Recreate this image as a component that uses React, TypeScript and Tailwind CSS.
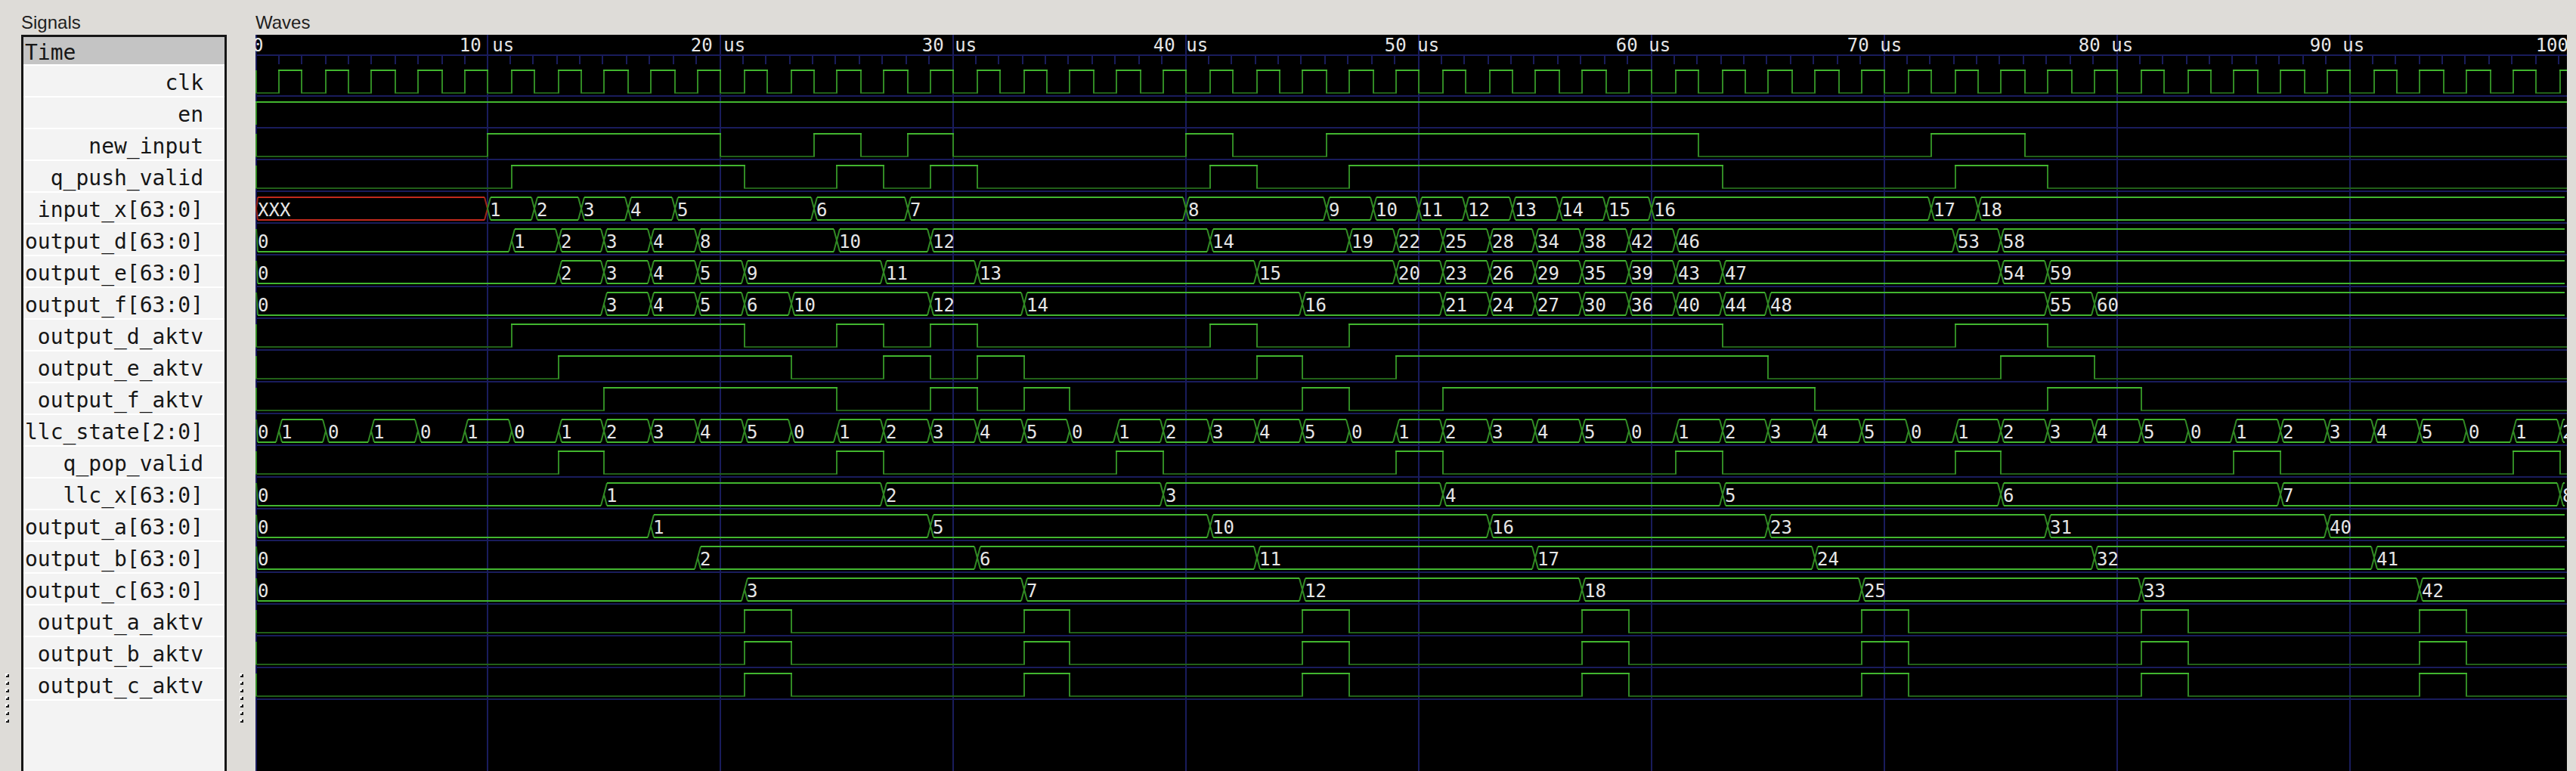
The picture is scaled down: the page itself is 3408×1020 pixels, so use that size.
const PX_PER_US = 15.3995;
const ROW = 42;
const DURATION = 100;

type Signal =
  | { name: string; kind: "bit"; edges: number[]; start?: boolean }
  | { name: string; kind: "bus"; values: [number, string][] };

const bus = (name: string, text: string): Signal => ({
  name,
  kind: "bus",
  values: text.split(" ").map((entry) => {
    const [t, v] = entry.split("=");
    return [Number(t), v] as [number, string];
  }),
});

const bit = (name: string, edges: number[], start = false): Signal => ({ name, kind: "bit", edges, start });

const stateText = () => {
  const out = ["0=0", "1=1", "3=0", "5=1", "7=0", "9=1", "11=0"];
  for (let t = 13; t < DURATION; t += 12) {
    for (let i = 0; i < 6; i++) {
      if (t + i * 2 < DURATION) out.push(`${t + i * 2}=${(i + 1) % 6}`);
    }
  }
  return out.join(" ");
};

const clockEdges = Array.from({ length: 99 }, (_, i) => i + 1);
const pulses = [21, 23, 33, 35, 45, 47, 57, 59, 69, 71, 81, 83, 93, 95];
const pushEdges = [11, 21, 25, 27, 29, 31, 41, 43, 47, 63, 73, 77];

const signals: Signal[] = [
  bit("clk", clockEdges),
  bit("en", [], true),
  bit("new_input", pushEdges.map((t) => t - 1)),
  bit("q_push_valid", pushEdges),
  bus("input_x[63:0]", "0=XXX 10=1 12=2 14=3 16=4 18=5 24=6 28=7 40=8 46=9 48=10 50=11 52=12 54=13 56=14 58=15 60=16 72=17 74=18"),
  bus("output_d[63:0]", "0=0 11=1 13=2 15=3 17=4 19=8 25=10 29=12 41=14 47=19 49=22 51=25 53=28 55=34 57=38 59=42 61=46 73=53 75=58"),
  bus("output_e[63:0]", "0=0 13=2 15=3 17=4 19=5 21=9 27=11 31=13 43=15 49=20 51=23 53=26 55=29 57=35 59=39 61=43 63=47 75=54 77=59"),
  bus("output_f[63:0]", "0=0 15=3 17=4 19=5 21=6 23=10 29=12 33=14 45=16 51=21 53=24 55=27 57=30 59=36 61=40 63=44 65=48 77=55 79=60"),
  bit("output_d_aktv", pushEdges),
  bit("output_e_aktv", [13, 23, 27, 29, 31, 33, 43, 45, 49, 65, 75, 79]),
  bit("output_f_aktv", [15, 25, 29, 31, 33, 35, 45, 47, 51, 67, 77, 81]),
  bus("llc_state[2:0]", stateText()),
  bit("q_pop_valid", [13, 15, 25, 27, 37, 39, 49, 51, 61, 63, 73, 75, 85, 87, 97, 99]),
  bus("llc_x[63:0]", "0=0 15=1 27=2 39=3 51=4 63=5 75=6 87=7 99=8"),
  bus("output_a[63:0]", "0=0 17=1 29=5 41=10 53=16 65=23 77=31 89=40"),
  bus("output_b[63:0]", "0=0 19=2 31=6 43=11 55=17 67=24 79=32 91=41"),
  bus("output_c[63:0]", "0=0 21=3 33=7 45=12 57=18 69=25 81=33 93=42"),
  bit("output_a_aktv", pulses),
  bit("output_b_aktv", pulses),
  bit("output_c_aktv", pulses),
];

const snap = (t: number) => Math.max(0, Math.floor(PX_PER_US * t - 0.155));
const timeX = (t: number) => 2 * snap(t) + 1;
const END = 3058;
const LABEL_STEP = 306;

function BitWave({ edges, start, y }: { edges: number[]; start?: boolean; y: number }) {
  const hi = y;
  const lo = y + 30;
  const points = [0, ...edges, -1];
  let high = "";
  let low = "";
  let level = Boolean(start);
  for (let i = 0; i < points.length - 1; i++) {
    const x1 = timeX(points[i]);
    const x2 = points[i + 1] < 0 ? END : timeX(points[i + 1]);
    if (level) high += `M${x1 - 1} ${hi}H${x2 + 1}`;
    else low += `M${x1 - 1} ${lo}H${x2 + 1}`;
    level = !level;
  }
  const vertical = [0, ...edges].map((t) => `M${timeX(t)} ${hi}V${lo}`).join("");
  return (
    <g fill="none" strokeWidth="2">
      <path d={low} stroke="#215f18" />
      <path d={vertical} stroke="#318a24" />
      <path d={high} stroke="#42b62f" />
    </g>
  );
}

function BusWave({ values, y }: { values: [number, string][]; y: number }) {
  const hi = y;
  const lo = y + 30;
  const mid = y + 15;
  return (
    <g fill="none" strokeWidth="2">
      {values.map(([t, v], i) => {
        const last = i === values.length - 1;
        const x1 = timeX(t);
        const x2 = last ? END : timeX(values[i + 1][0]);
        const left = x1 + (t === 0 ? 2 : 4);
        const right = last ? END - 3 : x2 - 4;
        const unknown = v === "XXX";
        const line = unknown ? "#c12a1c" : "#42b62f";
        const slope = unknown ? "#9c2417" : "#318a24";
        const zero = v === "0";
        const flat = `M${left} ${lo}H${right}` + (zero ? "" : `M${left} ${hi}H${right}`);
        const open = zero ? `M${x1} ${t === 0 ? hi : mid}L${left} ${lo}` : `M${left} ${hi}L${x1} ${mid}L${left} ${lo}`;
        const close = last ? "" : zero ? `M${x2} ${mid}L${right} ${lo}` : `M${right} ${hi}L${x2} ${mid}L${right} ${lo}`;
        return (
          <g key={t}>
            <path d={open + close} stroke={slope} />
            <path d={flat} stroke={line} />
            <text x={x1 + (t === 0 ? 2 : 3)} y={y + 25} fill="#e6e6e6" stroke="none">
              {v}
            </text>
          </g>
        );
      })}
    </g>
  );
}

function Waves() {
  const majors = Array.from({ length: 10 }, (_, i) => i * 10);
  const grid = majors.map((t) => `M${timeX(t)} 0V2000`).join("");
  const rules = signals.map((_, i) => `M0 ${81 + i * ROW}H${END}`).join("");
  const ticks = majors
    .flatMap((m) => [1, 2, 3, 4, 5, 6, 7, 8, 9].map((j) => `M${timeX(m) + 2 * snap(j)} 28V39`))
    .join("");
  return (
    <svg
      className="block h-full w-[3058px] font-['DejaVu_Sans_Mono',monospace] text-[24px]"
      role="img"
      aria-label="Signal waveforms"
    >
      <path d={grid + rules + ticks + `M0 27H${END}`} stroke="#191c5c" strokeWidth="2" />
      <g fill="#e6e6e6">
        <text x="-4" y="22">0</text>
        {[1, 2, 3, 4, 5, 6, 7, 8, 9, 10].map((n) => (
          <text key={n} x={LABEL_STEP * n} y="22" textAnchor="middle">
            {n * 10} us
          </text>
        ))}
      </g>
      {signals.map((s, i) =>
        s.kind === "bit" ? (
          <BitWave key={s.name} edges={s.edges} start={s.start} y={47 + i * ROW} />
        ) : (
          <BusWave key={s.name} values={s.values} y={47 + i * ROW} />
        ),
      )}
    </svg>
  );
}

function Grip() {
  return (
    <div className="flex flex-col gap-[5px] pb-16" aria-hidden="true">
      {Array.from({ length: 7 }, (_, i) => (
        <svg key={i} className="h-[5px] w-[5px]" viewBox="0 0 5 5">
          <path d="M0 0H4V4H0Z" fill="#ffffff" />
          <path d="M3 1H5V5H1V3H3Z" fill="#1a1a1a" />
        </svg>
      ))}
    </div>
  );
}

export default function App() {
  return (
    <main className="flex h-screen overflow-hidden bg-[#dedcd8] pr-3 font-['Liberation_Sans',sans-serif] text-black">
      <div className="flex w-7 shrink-0 flex-col justify-end pl-[7px]">
        <Grip />
      </div>
      <section className="flex w-[272px] shrink-0 flex-col">
        <h2 className="h-[46px] pt-4 text-[24px] leading-[28px] text-[#1e1e1e]">Signals</h2>
        <div className="flex-1 border-x-3 border-t-3 border-[#161616] bg-[#f3f3f3] font-['DejaVu_Sans_Mono',monospace] text-[28px] whitespace-pre text-[#161616]">
          <div className="h-9 bg-[#c4c4c4] pl-0.5 leading-[42px]">Time</div>
          <ul>
            {signals.map((s) => (
              <li
                key={s.name}
                className="flex h-[42px] justify-end border-t-2 border-white pr-7 leading-[46px]"
              >
                {s.name}
              </li>
            ))}
            <li className="border-t-2 border-white" />
          </ul>
        </div>
      </section>
      <div className="flex w-[38px] shrink-0 flex-col justify-end pl-[17px]">
        <Grip />
      </div>
      <section className="flex min-w-0 flex-1 flex-col">
        <h2 className="h-[46px] pt-4 text-[24px] leading-[28px] text-[#1e1e1e]">Waves</h2>
        <div className="min-h-0 flex-1 overflow-hidden bg-black">
          <Waves />
        </div>
      </section>
    </main>
  );
}
